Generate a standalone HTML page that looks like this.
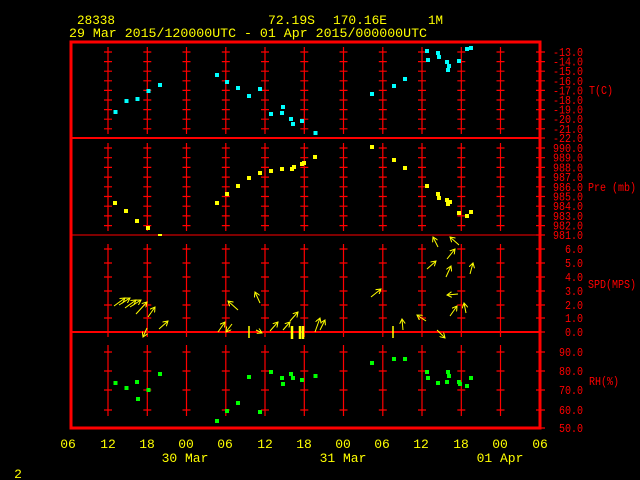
<!DOCTYPE html>
<html><head><meta charset="utf-8"><style>
html,body{margin:0;padding:0;background:#000;width:640px;height:480px;overflow:hidden}
svg{display:block}
text{font-family:"Liberation Mono",monospace;}
</style></head><body>
<svg width="640" height="480" viewBox="0 0 640 480" xmlns="http://www.w3.org/2000/svg">
<defs>
<marker id="ah" markerWidth="6" markerHeight="6" refX="5" refY="3" orient="auto" markerUnits="userSpaceOnUse">
<path d="M0,0 L5,3 L0,6" fill="none" stroke="#ff0" stroke-width="1"/>
</marker>
<g id="col" stroke="#f00" stroke-width="1.2" fill="none">
<path d="M0 47V134M0 143V231M0 244V337M0 345V416"/>
<path d="M-4 52h8M-4 61.6h8M-4 71.2h8M-4 80.8h8M-4 90.4h8M-4 100h8M-4 109.6h8M-4 119.2h8M-4 128.8h8
M-4 148h8M-4 157.7h8M-4 167.4h8M-4 177.1h8M-4 186.8h8M-4 196.5h8M-4 206.2h8M-4 215.9h8M-4 225.6h8
M-4 249h8M-4 263h8M-4 277h8M-4 291h8M-4 305h8M-4 318h8
M-4 352h8M-4 371h8M-4 390h8M-4 410h8"/>
</g>
</defs>
<g fill="#ff0" font-size="13">
<text x="77" y="24" textLength="38" lengthAdjust="spacingAndGlyphs">28338</text>
<text x="268" y="24" textLength="47" lengthAdjust="spacingAndGlyphs">72.19S</text>
<text x="333" y="24" textLength="54" lengthAdjust="spacingAndGlyphs">170.16E</text>
<text x="428" y="24" textLength="15" lengthAdjust="spacingAndGlyphs">1M</text>
<text x="69" y="37" textLength="358" lengthAdjust="spacingAndGlyphs">29 Mar 2015/120000UTC - 01 Apr 2015/000000UTC</text>
</g>
<use href="#col" x="108"/><use href="#col" x="147.3"/><use href="#col" x="186.5"/><use href="#col" x="225.8"/>
<use href="#col" x="265"/><use href="#col" x="304.3"/><use href="#col" x="343.5"/><use href="#col" x="382.8"/>
<use href="#col" x="422"/><use href="#col" x="461.3"/><use href="#col" x="500.5"/>
<g stroke="#f00" fill="none">
<rect x="71" y="42" width="469" height="386" stroke-width="3"/>
<path d="M71 138H540M71 332H540" stroke-width="2"/>
<path d="M71 235H540" stroke-width="1"/>
<path d="M536 52h9M536 61.6h9M536 71.2h9M536 80.8h9M536 90.4h9M536 100h9M536 109.6h9M536 119.2h9M536 128.8h9M536 138h9
M536 148h9M536 157.7h9M536 167.4h9M536 177.1h9M536 186.8h9M536 196.5h9M536 206.2h9M536 215.9h9M536 225.6h9M536 235h9
M536 249h9M536 263h9M536 277h9M536 291h9M536 305h9M536 318h9M536 332h9
M536 352h9M536 371h9M536 390h9M536 410h9M536 428h9" stroke-width="1.2"/>
</g>
<g fill="#f00" font-size="12">
<text x="553" y="56" textLength="30" lengthAdjust="spacingAndGlyphs">-13.0</text><text x="553" y="65.6" textLength="30" lengthAdjust="spacingAndGlyphs">-14.0</text><text x="553" y="75.2" textLength="30" lengthAdjust="spacingAndGlyphs">-15.0</text><text x="553" y="84.8" textLength="30" lengthAdjust="spacingAndGlyphs">-16.0</text><text x="553" y="94.4" textLength="30" lengthAdjust="spacingAndGlyphs">-17.0</text><text x="553" y="104" textLength="30" lengthAdjust="spacingAndGlyphs">-18.0</text><text x="553" y="113.6" textLength="30" lengthAdjust="spacingAndGlyphs">-19.0</text><text x="553" y="123.2" textLength="30" lengthAdjust="spacingAndGlyphs">-20.0</text><text x="553" y="132.8" textLength="30" lengthAdjust="spacingAndGlyphs">-21.0</text><text x="553" y="142" textLength="30" lengthAdjust="spacingAndGlyphs">-22.0</text>
<text x="553" y="152" textLength="30" lengthAdjust="spacingAndGlyphs">990.0</text><text x="553" y="161.7" textLength="30" lengthAdjust="spacingAndGlyphs">989.0</text><text x="553" y="171.4" textLength="30" lengthAdjust="spacingAndGlyphs">988.0</text><text x="553" y="181.1" textLength="30" lengthAdjust="spacingAndGlyphs">987.0</text><text x="553" y="190.8" textLength="30" lengthAdjust="spacingAndGlyphs">986.0</text><text x="553" y="200.5" textLength="30" lengthAdjust="spacingAndGlyphs">985.0</text><text x="553" y="210.2" textLength="30" lengthAdjust="spacingAndGlyphs">984.0</text><text x="553" y="219.9" textLength="30" lengthAdjust="spacingAndGlyphs">983.0</text><text x="553" y="229.6" textLength="30" lengthAdjust="spacingAndGlyphs">982.0</text><text x="553" y="239" textLength="30" lengthAdjust="spacingAndGlyphs">981.0</text>
<text x="565" y="253" textLength="18" lengthAdjust="spacingAndGlyphs">6.0</text><text x="565" y="267" textLength="18" lengthAdjust="spacingAndGlyphs">5.0</text><text x="565" y="281" textLength="18" lengthAdjust="spacingAndGlyphs">4.0</text><text x="565" y="295" textLength="18" lengthAdjust="spacingAndGlyphs">3.0</text><text x="565" y="309" textLength="18" lengthAdjust="spacingAndGlyphs">2.0</text><text x="565" y="322" textLength="18" lengthAdjust="spacingAndGlyphs">1.0</text><text x="565" y="336" textLength="18" lengthAdjust="spacingAndGlyphs">0.0</text>
<text x="559" y="356" textLength="24" lengthAdjust="spacingAndGlyphs">90.0</text><text x="559" y="375" textLength="24" lengthAdjust="spacingAndGlyphs">80.0</text><text x="559" y="394" textLength="24" lengthAdjust="spacingAndGlyphs">70.0</text><text x="559" y="414" textLength="24" lengthAdjust="spacingAndGlyphs">60.0</text><text x="559" y="432" textLength="24" lengthAdjust="spacingAndGlyphs">50.0</text>
<text x="589" y="94" textLength="24" lengthAdjust="spacingAndGlyphs">T(C)</text>
<text x="588" y="191" textLength="48" lengthAdjust="spacingAndGlyphs">Pre (mb)</text>
<text x="588" y="288" textLength="48" lengthAdjust="spacingAndGlyphs">SPD(MPS)</text>
<text x="589" y="385" textLength="30" lengthAdjust="spacingAndGlyphs">RH(%)</text>
</g>
<g fill="#0ff">
<rect x="113.5" y="110" width="4" height="4"/><rect x="124.5" y="99" width="4" height="4"/><rect x="135.5" y="97" width="4" height="4"/><rect x="146.5" y="89" width="4" height="4"/><rect x="158" y="83" width="4" height="4"/><rect x="215" y="73" width="4" height="4"/><rect x="225" y="80" width="4" height="4"/><rect x="236" y="86" width="4" height="4"/><rect x="247" y="94" width="4" height="4"/><rect x="258" y="87" width="4" height="4"/><rect x="269" y="112" width="4" height="4"/><rect x="280" y="111" width="4" height="4"/><rect x="281" y="105" width="4" height="4"/><rect x="289" y="117" width="4" height="4"/><rect x="291" y="122" width="4" height="4"/><rect x="300" y="119" width="4" height="4"/><rect x="313.5" y="131" width="4" height="4"/><rect x="370" y="92" width="4" height="4"/><rect x="392" y="84" width="4" height="4"/><rect x="403" y="77" width="4" height="4"/><rect x="425" y="49" width="4" height="4"/><rect x="426" y="58" width="4" height="4"/><rect x="436" y="51" width="4" height="4"/><rect x="437" y="55" width="4" height="4"/><rect x="445" y="60" width="4" height="4"/><rect x="447" y="64" width="4" height="4"/><rect x="446" y="68" width="4" height="4"/><rect x="457" y="59" width="4" height="4"/><rect x="465" y="47" width="4" height="4"/><rect x="469" y="46" width="4" height="4"/>
</g>
<g fill="#ff0">
<rect x="113" y="201" width="4" height="4"/><rect x="124" y="209" width="4" height="4"/><rect x="135" y="219" width="4" height="4"/><rect x="146" y="226" width="4" height="4"/><rect x="158" y="234" width="4" height="2"/><rect x="215" y="201" width="4" height="4"/><rect x="225" y="192" width="4" height="4"/><rect x="236" y="184" width="4" height="4"/><rect x="247" y="176" width="4" height="4"/><rect x="258" y="171" width="4" height="4"/><rect x="269" y="169" width="4" height="4"/><rect x="280" y="167" width="4" height="4"/><rect x="290" y="167" width="4" height="4"/><rect x="292" y="165" width="4" height="4"/><rect x="300" y="162" width="4" height="4"/><rect x="302" y="161" width="4" height="4"/><rect x="313" y="155" width="4" height="4"/><rect x="370" y="145" width="4" height="4"/><rect x="392" y="158" width="4" height="4"/><rect x="403" y="166" width="4" height="4"/><rect x="425" y="184" width="4" height="4"/><rect x="436" y="192" width="4" height="4"/><rect x="437" y="196" width="4" height="4"/><rect x="445" y="198" width="4" height="4"/><rect x="448" y="200" width="4" height="4"/><rect x="446" y="202" width="4" height="4"/><rect x="457" y="211" width="4" height="4"/><rect x="465" y="214" width="4" height="4"/><rect x="469" y="210" width="4" height="4"/>
</g>
<g fill="#0f0">
<rect x="113.5" y="381" width="4" height="4"/><rect x="124.5" y="386" width="4" height="4"/><rect x="135" y="380" width="4" height="4"/><rect x="136" y="397" width="4" height="4"/><rect x="146.5" y="388" width="4" height="4"/><rect x="158" y="372" width="4" height="4"/><rect x="215" y="419" width="4" height="4"/><rect x="225" y="409" width="4" height="4"/><rect x="236" y="401" width="4" height="4"/><rect x="247" y="375" width="4" height="4"/><rect x="258" y="410" width="4" height="4"/><rect x="269" y="370" width="4" height="4"/><rect x="280" y="376" width="4" height="4"/><rect x="281" y="382" width="4" height="4"/><rect x="289" y="372" width="4" height="4"/><rect x="291" y="376" width="4" height="4"/><rect x="300" y="378" width="4" height="4"/><rect x="313.5" y="374" width="4" height="4"/><rect x="370" y="361" width="4" height="4"/><rect x="392" y="357" width="4" height="4"/><rect x="403" y="357" width="4" height="4"/><rect x="425" y="370" width="4" height="4"/><rect x="426" y="376" width="4" height="4"/><rect x="436" y="381" width="4" height="4"/><rect x="446" y="370" width="4" height="4"/><rect x="447" y="374" width="4" height="4"/><rect x="445" y="380" width="4" height="4"/><rect x="457" y="380" width="4" height="4"/><rect x="458" y="382" width="4" height="4"/><rect x="465" y="384" width="4" height="4"/><rect x="469" y="376" width="4" height="4"/>
</g>
<g stroke="#ff0" stroke-width="1" fill="none" marker-end="url(#ah)">
<path d="M114 306L125 298"/><path d="M119 305L130 298"/><path d="M125 308L136 300"/><path d="M130 307L141 300"/><path d="M136 314L147 302"/><path d="M148 317L155 307"/><path d="M159 329L168 321"/><path d="M147 328L143 337"/><path d="M238 310L228 301"/><path d="M260 303L255 292"/><path d="M218 332L225 322"/><path d="M232 324L226 332"/><path d="M270 331L278 322"/><path d="M283 330L290 322"/><path d="M290 321L298 312"/><path d="M315 332L320 318"/><path d="M320 330L325 320"/><path d="M256 330L262 333"/>
<path d="M438 247L433 237"/><path d="M459 245L450 237"/><path d="M447 259L455 249"/><path d="M427 269L436 261"/><path d="M446 277L451 266"/><path d="M470 274L473 263"/><path d="M371 297L381 289"/><path d="M458 294L447 295"/><path d="M450 316L457 306"/><path d="M466 313L464 303"/><path d="M403 330L402 319"/><path d="M426 321L417 315"/><path d="M437 330L445 338"/>
</g>
<g stroke="#ff0" stroke-width="1.5">
<path d="M249 326V338M393 326V338"/>
<path d="M292 326V339M300 326V339M303 326V339" stroke-width="2.5"/>
</g>
<g fill="#ff0" font-size="13" text-anchor="middle">
<text x="68" y="448">06</text><text x="108" y="448">12</text><text x="147" y="448">18</text><text x="186" y="448">00</text><text x="225" y="448">06</text><text x="265" y="448">12</text><text x="304" y="448">18</text><text x="343" y="448">00</text><text x="382" y="448">06</text><text x="421" y="448">12</text><text x="461" y="448">18</text><text x="500" y="448">00</text><text x="540" y="448">06</text>
<text x="185" y="462">30 Mar</text><text x="343" y="462">31 Mar</text><text x="500" y="462">01 Apr</text>
<text x="18" y="478">2</text>
</g>
</svg>
</body></html>
